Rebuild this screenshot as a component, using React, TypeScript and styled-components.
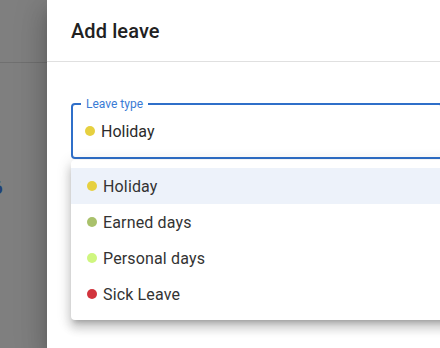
import styled, { createGlobalStyle } from 'styled-components'

const GlobalStyle = createGlobalStyle`
    html, body {
        margin: 0;
        padding: 0;
        width: 100%;
        height: 100%;
        overflow: hidden;
        font-family: Roboto, "Liberation Sans", sans-serif;
    }
    #root {
        height: 100%;
    }
`

const Screen = styled.div`
    position: relative;
    width: 440px;
    height: 348px;
    overflow: hidden;
    background: #ffffff;
`

const PageHeader = styled.div`
    height: 62px;
    border-bottom: 1px solid #e0e0e0;
`

const PageBody = styled.div`
    padding-top: 113px;
    font-size: 19px;
    font-weight: 500;
    color: #3d7ef0;
    span {
        display: inline-block;
        margin-left: -8px;
    }
`

const Backdrop = styled.div`
    position: absolute;
    inset: 0;
    background: rgba(0, 0, 0, 0.5);
`

const Drawer = styled.aside`
    position: absolute;
    top: 0;
    bottom: 0;
    left: 47px;
    width: 420px;
    background: #ffffff;
    box-shadow: 0px 8px 10px -5px rgba(0, 0, 0, 0.2), 0px 16px 24px 2px rgba(0, 0, 0, 0.14),
        0px 6px 30px 5px rgba(0, 0, 0, 0.12);
    display: flex;
    flex-direction: column;
`

const DrawerHeader = styled.header`
    height: 62px;
    box-sizing: border-box;
    padding: 0 24px;
    display: flex;
    align-items: center;
    border-bottom: 1px solid #e0e0e0;
    h2 {
        margin: 0;
        font-size: 20px;
        font-weight: 500;
        color: #212121;
        letter-spacing: 0.1px;
    }
`

const DrawerBody = styled.div`
    position: relative;
    padding: 41px 24px;
`

const Field = styled.div`
    position: relative;
    height: 56px;
    box-sizing: border-box;
    border: 2px solid #2f6fc9;
    border-radius: 4px;
    display: flex;
    align-items: center;
    padding: 0 12px;
`

const Legend = styled.label`
    position: absolute;
    top: -9px;
    left: 8px;
    padding: 0 5px;
    background: #ffffff;
    font-size: 12px;
    line-height: 16px;
    color: #3a7bd5;
`

const Value = styled.div`
    display: flex;
    align-items: center;
    gap: 6px;
    font-size: 16px;
    color: #2b2b2b;
`

const Dot = styled.span<{ $color: string }>`
    width: 10px;
    height: 10px;
    border-radius: 50%;
    background: ${({ $color }) => $color};
    flex-shrink: 0;
`

const Menu = styled.ul`
    position: absolute;
    top: 98px;
    left: 24px;
    width: 400px;
    margin: 0;
    padding: 8px 0;
    list-style: none;
    background: #ffffff;
    border-radius: 4px;
    box-shadow: 0px 5px 5px -3px rgba(0, 0, 0, 0.2), 0px 8px 10px 1px rgba(0, 0, 0, 0.14),
        0px 3px 14px 2px rgba(0, 0, 0, 0.12);
`

const Item = styled.li<{ $selected?: boolean }>`
    height: 36px;
    display: flex;
    align-items: center;
    gap: 6px;
    padding: 0 16px;
    font-size: 16px;
    color: #333333;
    letter-spacing: 0.15px;
    background: ${({ $selected }) => ($selected ? '#edf2fa' : 'transparent')};
`

const leaveTypes = [
    { name: 'Holiday', color: '#e6d040' },
    { name: 'Earned days', color: '#a9c16b' },
    { name: 'Personal days', color: '#cff67f' },
    { name: 'Sick Leave', color: '#d2343d' },
]

export default function App() {
    return (
        <Screen>
            <GlobalStyle />
            <PageHeader />
            <PageBody>
                <span>6</span>
            </PageBody>
            <Backdrop />
            <Drawer>
                <DrawerHeader>
                    <h2>Add leave</h2>
                </DrawerHeader>
                <DrawerBody>
                    <Field>
                        <Legend>Leave type</Legend>
                        <Value>
                            <Dot $color={leaveTypes[0].color} />
                            Holiday
                        </Value>
                    </Field>
                    <Menu>
                        {leaveTypes.map((t, i) => (
                            <Item key={t.name} $selected={i === 0}>
                                <Dot $color={t.color} />
                                {t.name}
                            </Item>
                        ))}
                    </Menu>
                </DrawerBody>
            </Drawer>
        </Screen>
    )
}
